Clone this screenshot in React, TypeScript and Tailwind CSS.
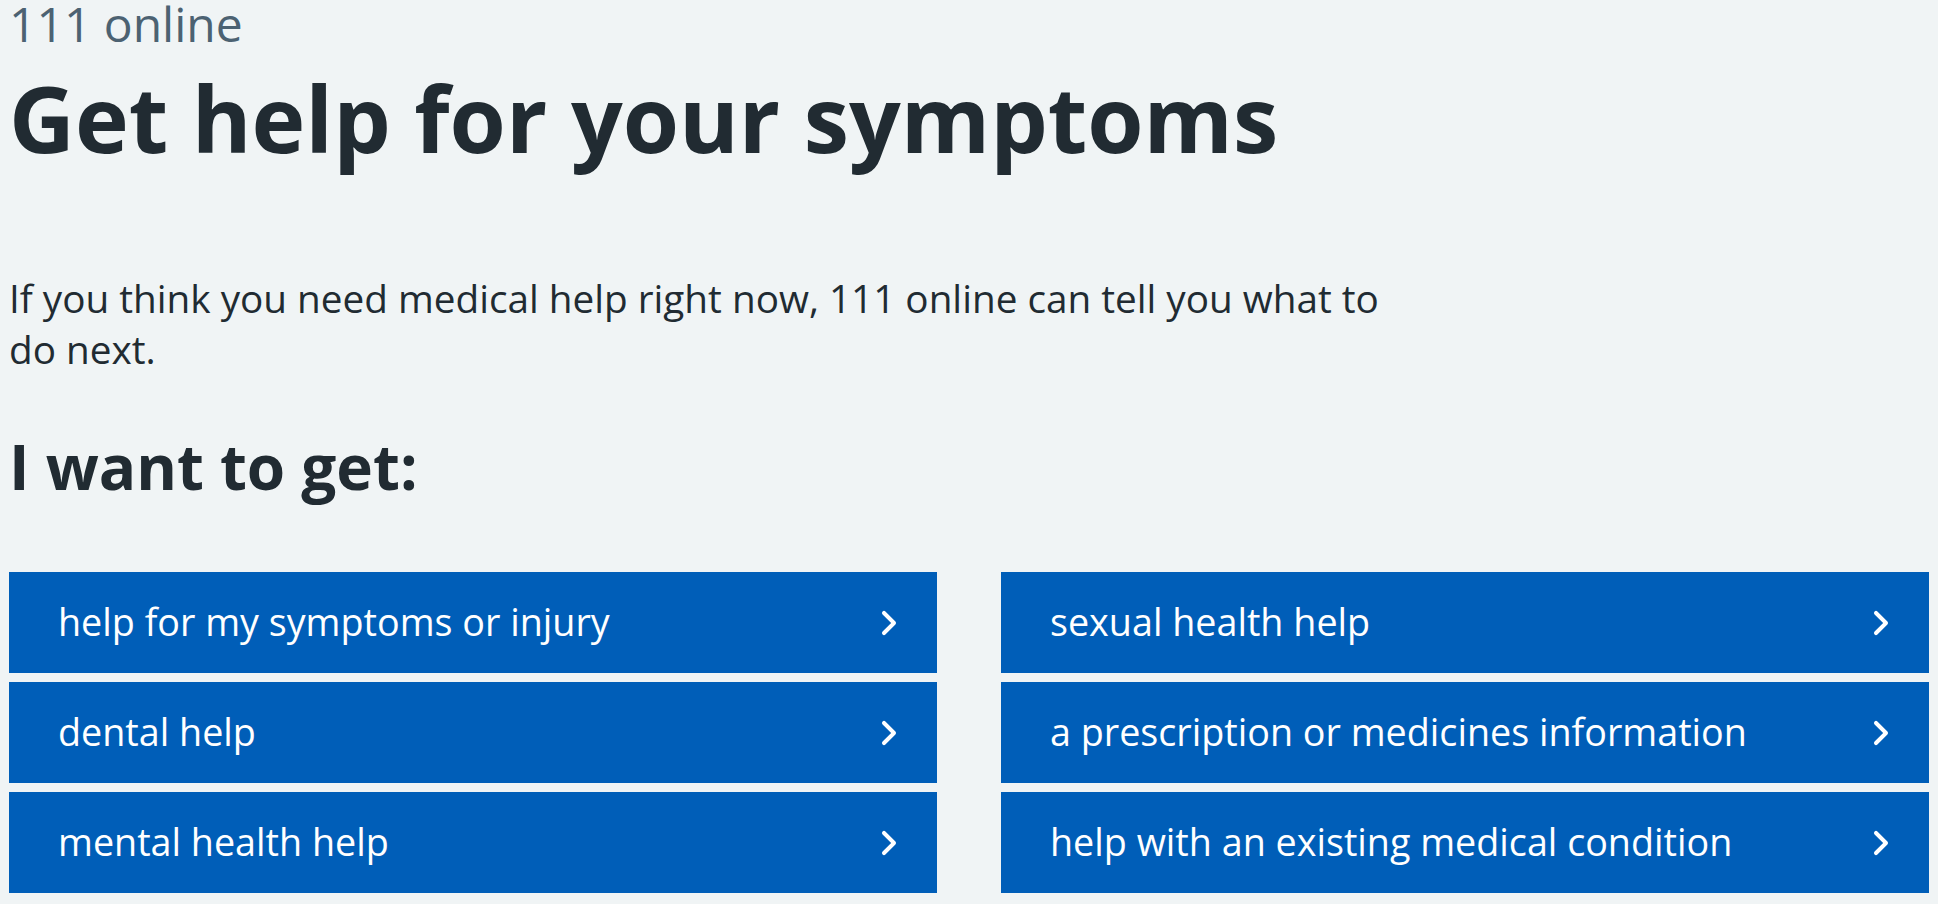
import React from "react";

const items = [
  "help for my symptoms or injury",
  "sexual health help",
  "dental help",
  "a prescription or medicines information",
  "mental health help",
  "help with an existing medical condition",
];

function Chevron() {
  return (
    <svg viewBox="0 0 24 24" className="w-[48px] h-[48px] shrink-0" fill="#ffffff" aria-hidden="true">
      <path d="M15.5 12a1 1 0 0 1-.29.71l-5 5a1 1 0 0 1-1.42-1.42l4.3-4.29-4.3-4.29a1 1 0 0 1 1.42-1.42l5 5a1 1 0 0 1 .29.71z" />
    </svg>
  );
}

export default function App() {
  return (
    <div
      className="min-h-screen bg-[#f0f4f5] text-[#212b32] px-[9px]"
      style={{ fontFamily: '"Open Sans", "Noto Sans", Arial, sans-serif' }}
    >
      <span className="block text-[48px] leading-[48px] text-[#4c6272]">111 online</span>
      <h1 className="mt-[20px] text-[91px] leading-[100px] font-bold">Get help for your symptoms</h1>
      <p className="mt-[105px] w-[1400px] text-[38.7px] leading-[51px]">
        If you think you need medical help right now, 111 online can tell you what to do next.
      </p>
      <h2 className="mt-[56px] text-[62px] leading-[70px] font-bold">I want to get:</h2>
      <ul className="mt-[71px] grid grid-cols-2 gap-x-[64px] gap-y-[9px]">
        {items.map((t) => (
          <li key={t}>
            <a
              href="#"
              className="flex h-[101px] items-center justify-between bg-[#005eb8] pl-[49px] pr-[24px] text-[37.7px] text-white"
            >
              <span>{t}</span>
              <Chevron />
            </a>
          </li>
        ))}
      </ul>
    </div>
  );
}
